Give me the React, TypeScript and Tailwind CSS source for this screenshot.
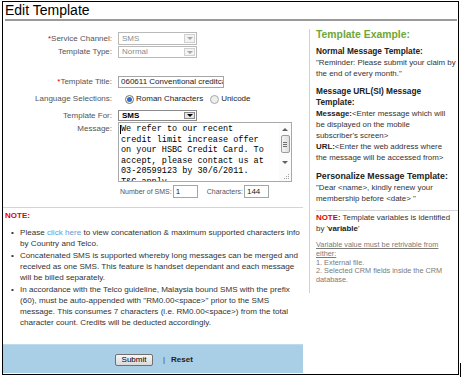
import React from 'react';

function Arrow({ color = '#999' }: { color?: string }) {
    return (
        <div
            className="w-0 h-0 border-x-[3px] border-x-transparent border-t-[3px]"
            style={{ borderTopColor: color }}
        />
    );
}

function Select({ value, disabled }: { value: string; disabled?: boolean }) {
    return (
        <div
            className={`flex w-[79px] h-full bg-white border ${
                disabled ? 'border-[#b9b9b9] text-[#8c8c8c]' : 'border-[#8a8a8a] text-black font-bold'
            }`}
        >
            <div className="flex-1 pl-[3px] text-[8px] leading-none flex items-center">{value}</div>
            {disabled ? (
                <div className="w-[11px] m-[1px] border border-[#d0d0d0] bg-[#f3f3f3] flex items-center justify-center">
                    <Arrow color="#a8a8a8" />
                </div>
            ) : (
                <div className="w-[11px] m-[1px] border border-[#8a8a8a] bg-[#e6e6e6] flex items-center justify-center">
                    <Arrow color="#000" />
                </div>
            )}
        </div>
    );
}

function Radio({ checked }: { checked?: boolean }) {
    return (
        <div
            className={`w-[9px] h-[9px] rounded-full border flex items-center justify-center ${
                checked ? 'border-[#6f6f6f] bg-white' : 'border-[#a8a8a8] bg-[#eeeeee]'
            }`}
        >
            {checked && <div className="w-[5px] h-[5px] rounded-full bg-[#2d6fc6]" />}
        </div>
    );
}

function Row({ label, required, className, children }: { label: string; required?: boolean; className: string; children: React.ReactNode }) {
    return (
        <div className={`flex items-center ${className}`}>
            <div className="w-[110px] shrink-0 pr-[1px] text-right text-[8px] leading-none text-[#555]">
                {required && <span className="text-[#e00000]">*</span>}
                {label}
            </div>
            <div className="ml-[5px] h-full flex items-center">{children}</div>
        </div>
    );
}

export default function App() {
    // lines kept as in the original form
    const message = [
        'We refer to our recent',
        'credit limit increase offer',
        'on your HSBC Credit Card. To',
        'accept, please contact us at',
        '03-20599123 by 30/6/2011.',
        'T&C apply.',
    ];

    return (
        <div className="relative w-[462px] h-[377px] bg-white overflow-hidden font-['Liberation_Sans',Arial,sans-serif]">
            <div className="ml-[2px] mt-[1px] w-[457px] h-[374px] border border-black flex flex-col">
                <div className="ml-[2px] mr-[1px] h-[19px] border-b-2 border-[#9a9a9a] text-[14px] leading-[17px] text-black">
                    Edit Template
                </div>

                <div className="flex flex-1">
                    {/* left: form */}
                    <div className="w-[300px] shrink-0 flex flex-col pt-[11px]">
                        <Row label="Service Channel:" required className="h-[13px]">
                            <Select value="SMS" disabled />
                        </Row>
                        <Row label="Template Type:" className="mt-[1px] h-[12px]">
                            <Select value="Normal" disabled />
                        </Row>
                        <Row label="Template Title:" required className="mt-[18px] h-[12px]">
                            <div className="w-[106px] h-full border border-[#a5a5a5] bg-white pl-[2px] overflow-hidden whitespace-nowrap text-[8px] leading-[10px] text-[#222]">
                                060611 Conventional creditcard
                            </div>
                        </Row>
                        <Row label="Language Selections:" className="mt-[5px] h-[12px]">
                            <div className="flex items-center ml-[7px] text-[8px] leading-none text-[#222]">
                                <Radio checked />
                                <span className="ml-[2px]">Roman Characters</span>
                                <div className="ml-[7px]">
                                    <Radio />
                                </div>
                                <span className="ml-[2px]">Unicode</span>
                            </div>
                        </Row>
                        <Row label="Template For:" className="mt-[5px] h-[11px]">
                            <Select value="SMS" />
                        </Row>

                        <div className="mt-[1px] h-[60px] flex">
                            <div className="w-[110px] shrink-0 pr-[1px] pt-[2px] text-right text-[8px] leading-[10px] text-[#555]">
                                Message:
                            </div>
                            <div className="ml-[5px] w-[174px] h-full border border-[#a9a9a9] bg-white flex">
                                <div className="relative flex-1 pl-[2px] pt-[1px] overflow-hidden whitespace-pre font-['Liberation_Mono',monospace] text-[8.5px] leading-[10.6px] text-black">
                                    <div className="absolute left-[1px] top-[2px] w-px h-[9px] bg-black" />
                                    {message.map((line) => (
                                        <div key={line}>{line}</div>
                                    ))}
                                </div>
                                <div className="w-[12px] shrink-0 flex flex-col items-center bg-[#fbfbfb]">
                                    <div className="mt-[5px] w-0 h-0 border-x-[3px] border-x-transparent border-b-[3px] border-b-[#606060]" />
                                    <div className="mt-[4px] w-[9px] h-[18px] rounded-[2px] border border-[#9b9b9b] bg-linear-to-r from-[#f4f4f4] to-[#dedede] flex flex-col items-center justify-center gap-[1px]">
                                        <div className="w-[4px] h-px bg-[#707070]" />
                                        <div className="w-[4px] h-px bg-[#707070]" />
                                        <div className="w-[4px] h-px bg-[#707070]" />
                                    </div>
                                    <div className="mt-[8px] w-0 h-0 border-x-[3px] border-x-transparent border-t-[3px] border-t-[#606060]" />
                                    <svg className="mt-auto self-end mb-[1px] mr-[1px]" width="6" height="6" viewBox="0 0 6 6">
                                        <rect x="4" y="0" width="1" height="1" fill="#a0a0a0" />
                                        <rect x="2" y="2" width="1" height="1" fill="#a0a0a0" />
                                        <rect x="4" y="2" width="1" height="1" fill="#a0a0a0" />
                                        <rect x="0" y="4" width="1" height="1" fill="#a0a0a0" />
                                        <rect x="2" y="4" width="1" height="1" fill="#a0a0a0" />
                                        <rect x="4" y="4" width="1" height="1" fill="#a0a0a0" />
                                    </svg>
                                </div>
                            </div>
                        </div>

                        <div className="mt-[3px] h-[13px] flex items-center pl-[117px] text-[7px] leading-none text-[#555]">
                            <span>Number of SMS:</span>
                            <div className="ml-[1px] w-[25px] h-full border border-[#a5a5a5] pl-[2px] flex items-center text-[8px] text-[#222]">1</div>
                            <span className="ml-[9px]">Characters:</span>
                            <div className="ml-[1px] w-[25px] h-full border border-[#a5a5a5] pl-[2px] flex items-center text-[8px] text-[#222]">144</div>
                        </div>

                        <div className="mt-[9px] border-t border-[#d4d4d4]" />

                        <div className="mt-[2px] pl-[2px] text-[8px] leading-[11px] font-bold text-[#e00000]">NOTE:</div>

                        <ul className="mt-[6px] text-[8.1px] leading-[11px] text-[#333] whitespace-nowrap">
                            <li className="flex mb-[1px]">
                                <span className="w-[17px] shrink-0 pl-[8px]">•</span>
                                <div>
                                    <div>
                                        Please <span className="text-[#5f9ad6]">click here</span> to view concatenation &amp; maximum supported characters info
                                    </div>
                                    <div>by Country and Telco.</div>
                                </div>
                            </li>
                            <li className="flex mb-[1px]">
                                <span className="w-[17px] shrink-0 pl-[8px]">•</span>
                                <div>
                                    <div>Concatenated SMS is supported whereby long messages can be merged and</div>
                                    <div>received as one SMS. This feature is handset dependant and each message</div>
                                    <div>will be billed separately.</div>
                                </div>
                            </li>
                            <li className="flex">
                                <span className="w-[17px] shrink-0 pl-[8px]">•</span>
                                <div>
                                    <div>In accordance with the Telco guideline, Malaysia bound SMS with the prefix</div>
                                    <div>(60), must be auto-appended with "RM0.00&lt;space&gt;" prior to the SMS</div>
                                    <div>message. This consumes 7 characters (i.e. RM0.00&lt;space&gt;) from the total</div>
                                    <div>character count. Credits will be deducted accordingly.</div>
                                </div>
                            </li>
                        </ul>

                        <div className="mt-auto mb-[1px] h-[29px] bg-[#a9cfe6] border-t border-[#bcdcee] flex items-center pl-[112px] pt-[1px]">
                            <button className="w-[38px] h-[12px] border border-[#707070] rounded-[2px] bg-linear-to-b from-[#f7f7f7] to-[#d9d9d9] text-[8px] leading-none text-black">
                                Submit
                            </button>
                            <span className="ml-[10px] text-[8px] leading-none text-[#444]">|</span>
                            <span className="ml-[6px] text-[8px] leading-none font-bold text-[#222]">Reset</span>
                        </div>
                    </div>

                    {/* right: examples */}
                    <div className="ml-[6px] mt-[8px] h-[264px] flex-1 border-l border-[#c6d4e2] pl-[6px] whitespace-nowrap">
                        <div className="text-[10.4px] leading-[11px] font-bold text-[#6fa637]">Template Example:</div>

                        <div className="mt-[6px] text-[7.9px] leading-[11px] text-[#333]">
                            <div className="text-[8.3px] font-bold text-[#222]">Normal Message Template:</div>
                            <div>"Reminder: Please submit your claim by</div>
                            <div>the end of every month."</div>
                        </div>

                        <div className="mt-[7px] text-[7.9px] leading-[11px] text-[#333]">
                            <div className="text-[8.3px] font-bold text-[#222]">Message URL(SI) Message</div>
                            <div className="text-[8.3px] font-bold text-[#222]">Template:</div>
                            <div>
                                <span className="font-bold text-[#222]">Message:</span>
                                {'<Enter message which will'}
                            </div>
                            <div>be displayed on the mobile</div>
                            <div>{"subscriber's screen>"}</div>
                            <div>
                                <span className="font-bold text-[#222]">URL:</span>
                                {'<Enter the web address where'}
                            </div>
                            <div>{'the message will be accessed from>'}</div>
                        </div>

                        <div className="mt-[8px] text-[7.9px] leading-[11px] text-[#333]">
                            <div className="text-[8.8px] font-bold text-[#222]">Personalize Message Template:</div>
                            <div>{'"Dear <name>, kindly renew your'}</div>
                            <div>{'membership before <date> "'}</div>
                        </div>

                        <div className="mt-[6px] border-t border-[#d4d4d4]" />

                        <div className="mt-[2px] text-[7.9px] leading-[10.5px] text-[#333]">
                            <div>
                                <span className="font-bold text-[#e00000]">NOTE:</span> Template variables is identified
                            </div>
                            <div>
                                by '<span className="font-bold text-[#222]">variable</span>'
                            </div>
                        </div>

                        <div className="mt-[7px] text-[7.3px] leading-[8.8px] text-[#7a7a7a]">
                            <div className="underline">Variable value must be retrivable from</div>
                            <div className="underline">either:</div>
                            <div>1. External file.</div>
                            <div>2. Selected CRM fields inside the CRM</div>
                            <div>database.</div>
                        </div>
                    </div>
                </div>
            </div>
            <div className="absolute left-[460px] top-[363px] w-px h-[14px] bg-black" />
        </div>
    );
}
